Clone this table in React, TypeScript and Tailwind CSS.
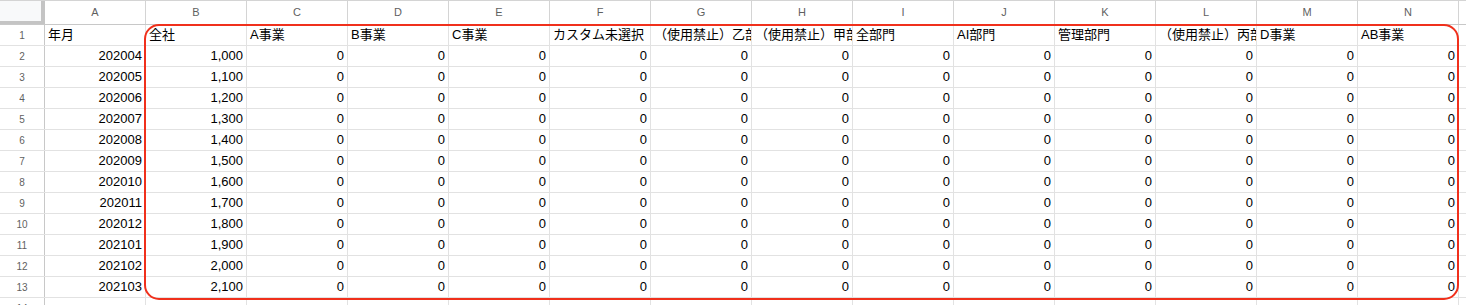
const columns = ["A", "B", "C", "D", "E", "F", "G", "H", "I", "J", "K", "L", "M", "N"];

const headers = [
  "年月",
  "全社",
  "A事業",
  "B事業",
  "C事業",
  "カスタム未選択",
  "（使用禁止）乙部門",
  "（使用禁止）甲部門",
  "全部門",
  "AI部門",
  "管理部門",
  "（使用禁止）丙部門",
  "D事業",
  "AB事業",
];

const months = [
  "202004",
  "202005",
  "202006",
  "202007",
  "202008",
  "202009",
  "202010",
  "202011",
  "202012",
  "202101",
  "202102",
  "202103",
];

const rows = months.map((m, i) => [m, (1000 + i * 100).toLocaleString("en-US"), ...Array(12).fill("0")]);

const font = { fontFamily: '"Liberation Sans", Arial, "Noto Sans CJK JP", sans-serif' };

export default function App() {
  return (
    <div className="relative w-[1466px] h-[305px] overflow-hidden bg-white" style={font}>
      <div className="border-t border-[#d4d4d4]">
        {/* column header row */}
        <div className="flex h-[24px] border-b border-[#c8c8c8]">
          <div className="w-[45px] shrink-0 bg-[#f8f9fa] border-r-[4px] border-b-[3px] border-[#c4c4c4]" />
          {columns.map((c) => (
            <div
              key={c}
              className="w-[101px] shrink-0 border-r border-[#d4d4d4] flex items-center justify-center text-[11px] text-[#5f5f5f]"
            >
              {c}
            </div>
          ))}
          <div className="flex-1" />
        </div>

        {/* row 1: headers */}
        <div className="flex h-[21px] border-b border-[#e2e2e2]">
          <div className="w-[45px] shrink-0 border-r border-[#c8c8c8] flex items-center justify-center text-[10px] text-[#5f5f5f]">
            1
          </div>
          {headers.map((h) => (
            <div
              key={h}
              className="w-[101px] shrink-0 border-r border-[#e2e2e2] px-[3px] flex items-center overflow-hidden whitespace-nowrap text-[13px] text-black"
            >
              {h}
            </div>
          ))}
          <div className="flex-1" />
        </div>

        {rows.map((r, i) => (
          <div key={i} className="flex h-[21px] border-b border-[#e2e2e2]">
            <div className="w-[45px] shrink-0 border-r border-[#c8c8c8] flex items-center justify-center text-[10px] text-[#5f5f5f]">
              {i + 2}
            </div>
            {r.map((v, j) => (
              <div
                key={j}
                className="w-[101px] shrink-0 border-r border-[#e2e2e2] px-[3px] flex items-center justify-end text-[13px] text-black"
              >
                {v}
              </div>
            ))}
            <div className="flex-1" />
          </div>
        ))}

        <div className="flex h-[21px]">
          <div className="w-[45px] shrink-0 border-r border-[#c8c8c8] flex items-center justify-center text-[10px] text-[#5f5f5f]">
            14
          </div>
          {columns.map((c) => (
            <div key={c} className="w-[101px] shrink-0 border-r border-[#e2e2e2]" />
          ))}
        </div>
      </div>

      {/* highlight */}
      <div className="absolute left-[144px] top-[24px] w-[1315px] h-[276px] border-2 border-[#f0301c] rounded-[15px] pointer-events-none" />
    </div>
  );
}
